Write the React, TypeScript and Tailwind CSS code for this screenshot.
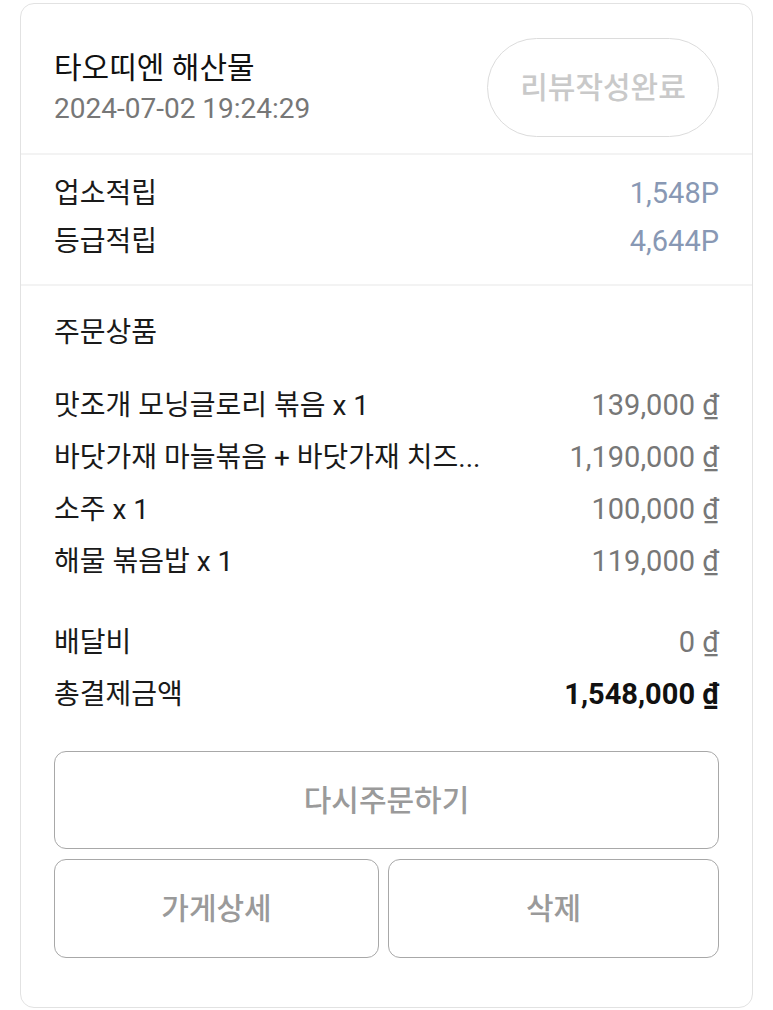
import React from "react";

const items = [
  { name: "맛조개 모닝글로리 볶음 x 1", price: "139,000" },
  { name: "바닷가재 마늘볶음 + 바닷가재 치즈...", price: "1,190,000" },
  { name: "소주 x 1", price: "100,000" },
  { name: "해물 볶음밥 x 1", price: "119,000" },
];

export default function App() {
  return (
    <div className="min-h-[1010px] w-[773px] bg-white font-['Roboto','Noto_Sans_CJK_KR',sans-serif] pt-[3px]">
      <div className="mx-[20px] h-[1005px] rounded-[14px] border border-[#e2e2e2] bg-white">
        {/* header */}
        <div className="flex items-center justify-between pl-[33px] pr-[33px] pt-[34px] pb-[16px]">
          <div className="flex flex-col">
            <div className="text-[30px] leading-[40px] text-[#111111]">타오띠엔 해산물</div>
            <div className="text-[28px] leading-[38px] text-[#777777] mt-[2px]">2024-07-02 19:24:29</div>
          </div>
          <div className="flex h-[99px] w-[232px] items-center justify-center rounded-full border border-[#dcdcdc] text-[30px] font-medium text-[#c9c9c9]">
            리뷰작성완료
          </div>
        </div>
        <div className="h-[2px] bg-[#f3f3f3]" />
        {/* points */}
        <div className="px-[33px] pt-[15px] pb-[18px]">
          <div className="flex h-[48px] items-center justify-between text-[28px]">
            <span className="text-[#1a1a1a]">업소적립</span>
            <span className="text-[29px] text-[#8898b4]">1,548P</span>
          </div>
          <div className="flex h-[48px] items-center justify-between text-[28px]">
            <span className="text-[#1a1a1a]">등급적립</span>
            <span className="text-[29px] text-[#8898b4]">4,644P</span>
          </div>
        </div>
        <div className="h-[2px] bg-[#f3f3f3]" />
        {/* order */}
        <div className="px-[33px] pt-[21px]">
          <div className="flex h-[52px] items-center text-[28px] text-[#1a1a1a]">주문상품</div>
          <div className="mt-[21px]">
            {items.map((it) => (
              <div key={it.name} className="flex h-[52px] items-center justify-between text-[28px]">
                <span className="text-[#1a1a1a]">{it.name}</span>
                <span className="text-[29px] text-[#777777]">{it.price} ₫</span>
              </div>
            ))}
          </div>
          <div className="mt-[29px]">
            <div className="flex h-[52px] items-center justify-between text-[28px]">
              <span className="text-[#1a1a1a]">배달비</span>
              <span className="text-[29px] text-[#777777]">0 ₫</span>
            </div>
            <div className="flex h-[52px] items-center justify-between text-[28px]">
              <span className="text-[#1a1a1a]">총결제금액</span>
              <span className="text-[29px] font-bold text-[#111111]">1,548,000 ₫</span>
            </div>
          </div>
          <div className="mt-[30px] flex flex-col gap-[10px]">
            <div className="flex h-[98px] items-center justify-center rounded-[12px] border-[1.5px] border-[#a8a8a8] text-[30px] font-medium text-[#9a9a9a]">
              다시주문하기
            </div>
            <div className="flex gap-[9px]">
              <div className="flex h-[99px] w-[325px] items-center justify-center rounded-[12px] border-[1.5px] border-[#a8a8a8] text-[30px] font-medium text-[#9a9a9a]">
                가게상세
              </div>
              <div className="flex h-[99px] flex-1 items-center justify-center rounded-[12px] border-[1.5px] border-[#a8a8a8] text-[30px] font-medium text-[#9a9a9a]">
                삭제
              </div>
            </div>
          </div>
        </div>
      </div>
    </div>
  );
}
